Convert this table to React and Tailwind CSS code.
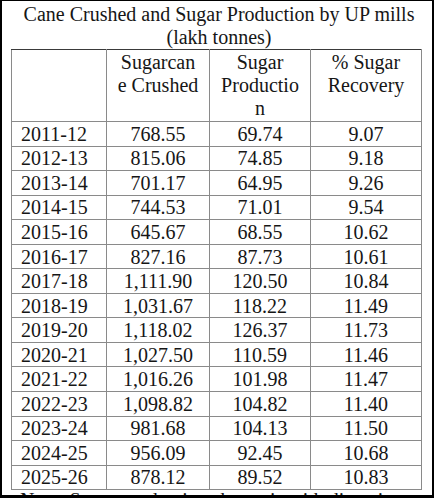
const ROWS = [
  ['2011-12', '768.55', '69.74', '9.07'],
  ['2012-13', '815.06', '74.85', '9.18'],
  ['2013-14', '701.17', '64.95', '9.26'],
  ['2014-15', '744.53', '71.01', '9.54'],
  ['2015-16', '645.67', '68.55', '10.62'],
  ['2016-17', '827.16', '87.73', '10.61'],
  ['2017-18', '1,111.90', '120.50', '10.84'],
  ['2018-19', '1,031.67', '118.22', '11.49'],
  ['2019-20', '1,118.02', '126.37', '11.73'],
  ['2020-21', '1,027.50', '110.59', '11.46'],
  ['2021-22', '1,016.26', '101.98', '11.47'],
  ['2022-23', '1,098.82', '104.82', '11.40'],
  ['2023-24', '981.68', '104.13', '11.50'],
  ['2024-25', '956.09', '92.45', '10.68'],
  ['2025-26', '878.12', '89.52', '10.83'],
]

export default function App() {
  return (
    <div
      className="w-[434px] h-[498px] bg-white border-l-2 border-r-2 border-t border-b-[3px] border-black overflow-hidden text-[#161616] text-[20px] leading-[23px]"
      style={{ fontFamily: '"Liberation Serif", "Times New Roman", serif' }}
    >
      {/* Title */}
      <div className="pt-[2px] text-center pl-[4px]">
        <div>Cane Crushed and Sugar Production by UP mills</div>
        <div>(lakh tonnes)</div>
      </div>

      <table className="ml-[9px] w-[410px] table-fixed border-collapse">
        <colgroup>
          <col className="w-[95px]" />
          <col className="w-[103px]" />
          <col className="w-[101px]" />
          <col className="w-[111px]" />
        </colgroup>
        <thead>
          <tr className="h-[72px]">
            <th className="border border-[#8a8a8a] border-t-[#3a3a3a] font-normal" />
            <th className="border border-[#8a8a8a] border-t-[#3a3a3a] font-normal align-top pt-[1px] px-0 break-all">
              Sugarcan<br />e Crushed
            </th>
            <th className="border border-[#8a8a8a] border-t-[#3a3a3a] font-normal align-top pt-[1px] px-0">
              Sugar<br />Productio<br />n
            </th>
            <th className="border border-[#8a8a8a] border-t-[#3a3a3a] font-normal align-top pt-[1px] px-0">
              % Sugar<br />Recovery
            </th>
          </tr>
        </thead>
        <tbody>
          {ROWS.map(([year, cane, sugar, rec]) => (
            <tr key={year} className="h-[24.55px]">
              <td className="border border-[#8a8a8a] pl-[9px] p-0 leading-[22px]">{year}</td>
              <td className="border border-[#8a8a8a] text-center p-0 leading-[22px]">{cane}</td>
              <td className="border border-[#8a8a8a] text-center p-0 leading-[22px]">{sugar}</td>
              <td className="border border-[#8a8a8a] text-center p-0 leading-[22px]">{rec}</td>
            </tr>
          ))}
        </tbody>
      </table>

      {/* Note, cut off by the frame */}
      <div className="pl-[18px] -mt-[1px] whitespace-nowrap">
        Note: Sugar production shown is with diversion to ethanol
      </div>
    </div>
  )
}
